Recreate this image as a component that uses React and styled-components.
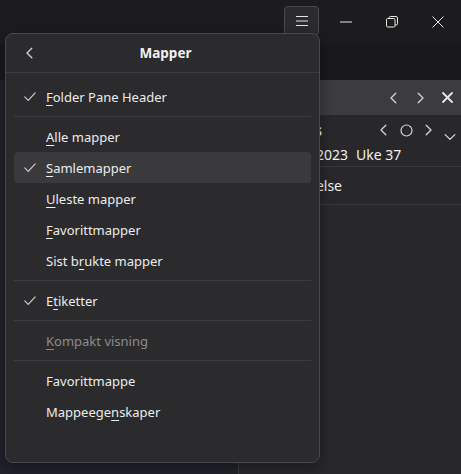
import React from 'react';
import styled, { createGlobalStyle } from 'styled-components';

const GlobalStyle = createGlobalStyle`
  html, body {
    margin: 0;
    padding: 0;
    background: #19191b;
  }
  body {
    font-family: "Noto Sans", "Open Sans", sans-serif;
    -webkit-font-smoothing: antialiased;
  }
`;

const Window = styled.div`
  position: relative;
  width: 461px;
  height: 474px;
  overflow: hidden;
  display: flex;
  flex-direction: column;
  background: #19191b;
  color: #e6e6e6;
`;

const TitleBar = styled.div`
  height: 43px;
  flex-shrink: 0;
  display: flex;
  justify-content: flex-end;
  align-items: flex-start;
  background: #1c1c1e;
`;

const MenuButton = styled.div`
  box-sizing: border-box;
  width: 35px;
  height: 30px;
  margin: 6px 4px 0 0;
  display: flex;
  align-items: center;
  justify-content: center;
  background: #2b2b2e;
  border: 1px solid #4a4a4e;
  border-radius: 4px;
`;

const WinButton = styled.div`
  width: 46px;
  height: 43px;
  display: flex;
  align-items: center;
  justify-content: center;
`;

const Strip = styled.div`
  height: 37px;
  flex-shrink: 0;
  background: #19191b;
`;

const Main = styled.div`
  flex: 1;
  display: flex;
`;

const LeftPane = styled.div`
  box-sizing: border-box;
  width: 239px;
  flex-shrink: 0;
  background: #21212a;
  border-right: 1px solid #3a3a3e;
`;

const RightPane = styled.div`
  flex: 1;
  display: flex;
  flex-direction: column;
  background: #28282b;
  min-width: 0;
`;

const PaneHeader = styled.div`
  height: 35px;
  display: flex;
  justify-content: flex-end;
  align-items: center;
  background: #3c3c40;
`;

const IconButton = styled.div`
  position: relative;
  top: ${({ $shift }) => $shift || 0}px;
  width: ${({ $w }) => $w || 26}px;
  height: 26px;
  display: flex;
  align-items: center;
  justify-content: center;
  flex-shrink: 0;
`;

const InfoRow = styled.div`
  box-sizing: border-box;
  height: 52px;
  display: flex;
  flex-direction: column;
  padding-top: 4px;
  padding-left: 11px;
  border-bottom: 1px solid #3a3a3e;
`;

const TitleLine = styled.div`
  height: 22px;
  display: flex;
  align-items: center;
`;

const EndCell = styled.div`
  width: ${({ $w }) => $w}px;
  flex-shrink: 0;
  display: flex;
  justify-content: flex-end;
  white-space: nowrap;
`;

const Title = styled.span`
  font-size: 16px;
  font-weight: 700;
  line-height: 22px;
  color: #f0f0f0;
`;

const DateLine = styled.div`
  display: flex;
  gap: 8px;
  margin-top: 2px;
  font-size: 14px;
  line-height: 24px;
  color: #f0f0f0;
  white-space: nowrap;
`;

const Nav = styled.div`
  margin-left: auto;
  display: flex;
  align-items: center;
`;

const ListRow = styled.div`
  box-sizing: border-box;
  height: 38px;
  display: flex;
  align-items: center;
  padding-left: 11px;
  font-size: 14px;
  color: #f0f0f0;
  border-bottom: 1px solid #3a3a3e;
`;

/* dropdown overlay */
const Menu = styled.div`
  position: absolute;
  left: 5px;
  top: 33px;
  width: 315px;
  height: 430px;
  box-sizing: border-box;
  background: #2b2b2e;
  border: 1px solid #48484c;
  border-radius: 8px;
  box-shadow: 0 4px 14px rgba(0, 0, 0, 0.35);
  display: flex;
  flex-direction: column;
`;

const MenuHeader = styled.div`
  position: relative;
  height: 38px;
  display: flex;
  align-items: center;
  justify-content: center;
  padding-left: 6px;
  border-bottom: 1px solid #3d3d41;
  font-size: 13.5px;
  font-weight: 700;
  color: #f0f0f0;
`;

const BackButton = styled.div`
  position: absolute;
  left: 18px;
  top: 9px;
  width: 12px;
  height: 20px;
  display: flex;
  align-items: center;
  justify-content: center;
`;

const MenuList = styled.div`
  padding: 8px 8px 0;
  display: flex;
  flex-direction: column;
`;

const Item = styled.div`
  position: relative;
  height: 31px;
  display: flex;
  align-items: center;
  padding-left: 32px;
  border-radius: 4px;
  font-size: 13px;
  white-space: nowrap;
  color: ${({ $disabled }) => ($disabled ? '#8b8b8e' : '#ececec')};
  background: ${({ $active }) => ($active ? '#3a3a3d' : 'transparent')};
`;

const Check = styled.span`
  position: absolute;
  left: 10px;
  top: 11px;
  display: flex;
`;

const Key = styled.span`
  text-decoration: underline;
  text-underline-offset: 3px;
  text-decoration-thickness: 1px;
`;

const Separator = styled.div`
  height: 1px;
  margin: 4px 0;
  background: #3d3d41;
`;

const stroke = { fill: 'none', stroke: '#d4d4d4', strokeWidth: 1, strokeLinecap: 'round', strokeLinejoin: 'round' };

const Chevron = ({ dir = 'left', size = 10 }) => {
  const paths = {
    left: 'M6.5 1 L2.5 5 L6.5 9',
    right: 'M3.5 1 L7.5 5 L3.5 9',
    down: 'M1 3 L5 7 L9 3',
  };
  return (
    <svg width={size} height={size} viewBox="0 0 10 10">
      <path d={paths[dir]} {...stroke} strokeWidth={1.1} />
    </svg>
  );
};

const CheckMark = () => (
  <svg width="12" height="10" viewBox="0 0 12 10">
    <path d="M0.8 4.8 L4.2 8.3 L11.2 0.8" {...stroke} strokeWidth={1.1} />
  </svg>
);

const items = [
  { label: 'Folder Pane Header', k: 0, checked: true },
  'sep',
  { label: 'Alle mapper', k: 0 },
  { label: 'Samlemapper', k: 0, checked: true, active: true },
  { label: 'Uleste mapper', k: 0 },
  { label: 'Favorittmapper', k: 0 },
  { label: 'Sist brukte mapper', k: 6 },
  'sep',
  { label: 'Etiketter', k: 1, checked: true },
  'sep',
  { label: 'Kompakt visning', k: 0, disabled: true },
  'sep',
  { label: 'Favorittmappe' },
  { label: 'Mappeegenskaper', k: 8 },
];

const Label = ({ text, k }) =>
  k === undefined ? (
    text
  ) : (
    <>
      {text.slice(0, k)}
      <Key>{text[k]}</Key>
      {text.slice(k + 1)}
    </>
  );

const App = () => (
  <Window>
    <GlobalStyle />
    <TitleBar>
      <MenuButton>
        <svg width="14" height="12" viewBox="0 0 14 12">
          <path d="M1 1.5 H13 M1 6 H13 M1 10.5 H13" stroke="#e6e6e6" strokeWidth="1" />
        </svg>
      </MenuButton>
      <WinButton>
        <svg width="12" height="2" viewBox="0 0 12 2">
          <path d="M0 1 H12" stroke="#e6e6e6" strokeWidth="1" />
        </svg>
      </WinButton>
      <WinButton>
        <svg width="12" height="12" viewBox="0 0 12 12">
          <rect x="0.5" y="2.5" width="8.5" height="8.5" rx="1.2" fill="none" stroke="#e6e6e6" strokeWidth="1" />
          <path d="M3 2.5 V2 a1.5 1.5 0 0 1 1.5 -1.5 H10 a1.5 1.5 0 0 1 1.5 1.5 V7.5 a1.5 1.5 0 0 1 -1.5 1.5 H9" fill="none" stroke="#e6e6e6" strokeWidth="1" />
        </svg>
      </WinButton>
      <WinButton>
        <svg width="12" height="12" viewBox="0 0 12 12">
          <path d="M0.5 0.5 L11.5 11.5 M11.5 0.5 L0.5 11.5" stroke="#e6e6e6" strokeWidth="1" />
        </svg>
      </WinButton>
    </TitleBar>
    <Strip />
    <Main>
      <LeftPane />
      <RightPane>
        <PaneHeader>
          <IconButton>
            <Chevron dir="left" size={12} />
          </IconButton>
          <IconButton>
            <Chevron dir="right" size={12} />
          </IconButton>
          <IconButton $w={28}>
            <svg width="11" height="11" viewBox="0 0 11 11">
              <path d="M1 1 L10 10 M10 1 L1 10" stroke="#e8e8e8" strokeWidth="1.8" strokeLinecap="round" />
            </svg>
          </IconButton>
        </PaneHeader>
        <InfoRow>
          <TitleLine>
            <EndCell $w={72}>
              <Title>Denne ukens</Title>
            </EndCell>
            <Nav>
              <IconButton $w={22}>
                <Chevron dir="left" size={12} />
              </IconButton>
              <IconButton $w={22}>
                <svg width="13" height="13" viewBox="0 0 13 13">
                  <circle cx="6.5" cy="6.5" r="5.5" {...stroke} strokeWidth={1.2} />
                </svg>
              </IconButton>
              <IconButton $w={22}>
                <Chevron dir="right" size={12} />
              </IconButton>
              <IconButton $w={22} $shift={7}>
                <Chevron dir="down" size={12} />
              </IconButton>
            </Nav>
          </TitleLine>
          <DateLine>
            <EndCell $w={98}>sep. 2023</EndCell>
            <span>Uke 37</span>
          </DateLine>
        </InfoRow>
        <ListRow>
          <EndCell $w={92}>Ny hendelse</EndCell>
        </ListRow>
      </RightPane>
    </Main>

    <Menu>
      <MenuHeader>
        <BackButton>
          <Chevron dir="left" size={12} />
        </BackButton>
        Mapper
      </MenuHeader>
      <MenuList>
        {items.map((it, i) =>
          it === 'sep' ? (
            <Separator key={i} />
          ) : (
            <Item key={i} $active={it.active} $disabled={it.disabled}>
              {it.checked && (
                <Check>
                  <CheckMark />
                </Check>
              )}
              <Label text={it.label} k={it.k} />
            </Item>
          )
        )}
      </MenuList>
    </Menu>
  </Window>
);

export default App;
